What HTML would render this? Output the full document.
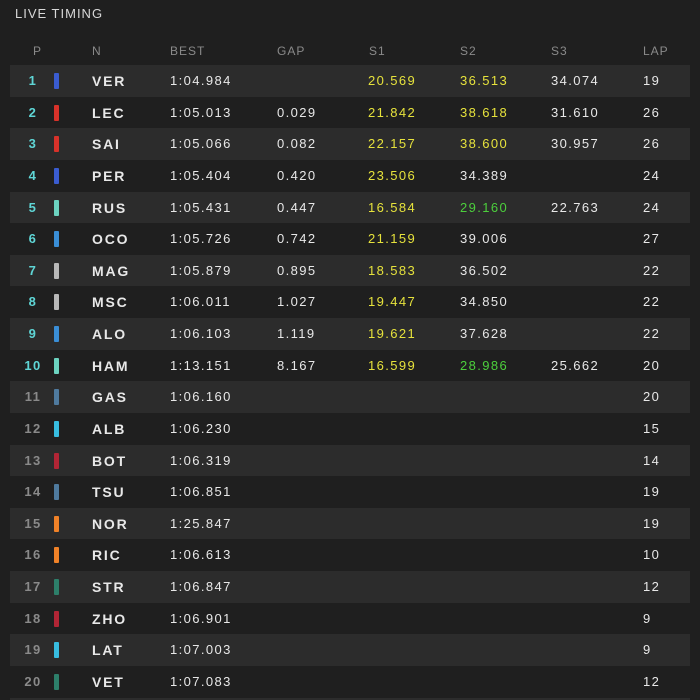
<!DOCTYPE html>
<html style="height:700px;overflow:hidden"><head><meta charset="utf-8"><style>
body{margin:0;width:700px;height:700px;background:#1f1f1f;overflow:hidden;font-family:"Liberation Sans",sans-serif;color:#e8e8e8;position:relative}
.t{position:absolute;left:15px;top:6px;font-size:13px;letter-spacing:1px;color:#d8d8d8}
.h{position:absolute;top:44px;font-size:12px;color:#8a8a8a;letter-spacing:1px}
.r{position:absolute;left:10px;width:680px;height:31.6px}
.r.s{background:#2c2c2c}
.r span{position:absolute;top:8px;font-size:13px;letter-spacing:1.4px;white-space:nowrap}
.p{font-weight:bold;width:46px;text-align:center;left:0}
.c{position:absolute;left:44px;top:8px;width:5px;height:16px;border-radius:1px}
.n{left:82px;font-weight:bold;font-size:14px!important;letter-spacing:1.8px!important}
.y{color:#e6e23c}.g{color:#4ccf3c}
</style></head><body>
<div class="t">LIVE TIMING</div>
<div class="h" style="left:33px">P</div><div class="h" style="left:92px">N</div><div class="h" style="left:170px">BEST</div><div class="h" style="left:277px">GAP</div><div class="h" style="left:369px">S1</div><div class="h" style="left:460px">S2</div><div class="h" style="left:551px">S3</div><div class="h" style="left:643px">LAP</div>
<div id="rows"></div>
<script>
var d=[
[1,'#3a5cd0','VER','1:04.984','','20.569y','36.513y','34.074','19'],
[2,'#d8322a','LEC','1:05.013','0.029','21.842y','38.618y','31.610','26'],
[3,'#d8322a','SAI','1:05.066','0.082','22.157y','38.600y','30.957','26'],
[4,'#3a5cd0','PER','1:05.404','0.420','23.506y','34.389','','24'],
[5,'#6cd3c0','RUS','1:05.431','0.447','16.584y','29.160g','22.763','24'],
[6,'#3a8ed6','OCO','1:05.726','0.742','21.159y','39.006','','27'],
[7,'#b8b8b8','MAG','1:05.879','0.895','18.583y','36.502','','22'],
[8,'#b8b8b8','MSC','1:06.011','1.027','19.447y','34.850','','22'],
[9,'#3a8ed6','ALO','1:06.103','1.119','19.621y','37.628','','22'],
[10,'#6cd3c0','HAM','1:13.151','8.167','16.599y','28.986g','25.662','20'],
[11,'#4f7a9e','GAS','1:06.160','','','','','20'],
[12,'#38bde0','ALB','1:06.230','','','','','15'],
[13,'#b12535','BOT','1:06.319','','','','','14'],
[14,'#4f7a9e','TSU','1:06.851','','','','','19'],
[15,'#f08228','NOR','1:25.847','','','','','19'],
[16,'#f08228','RIC','1:06.613','','','','','10'],
[17,'#2d7f6a','STR','1:06.847','','','','','12'],
[18,'#b12535','ZHO','1:06.901','','','','','9'],
[19,'#38bde0','LAT','1:07.003','','','','','9'],
[20,'#2d7f6a','VET','1:07.083','','','','','12'],
[21,'#4f7a9e','VET','1:07.120','','','','','5']];
var h='',xs=[160,267,358,450,541,633];
d.forEach(function(r,i){
var top=65+i*31.63;
h+='<div class="r'+(i%2==0?' s':'')+'" style="top:'+top+'px">';
h+='<span class="p" style="color:'+(r[0]<=10?'#5fd6d6':'#8a8a8a')+'">'+r[0]+'</span>';
h+='<div class="c" style="background:'+r[1]+'"></div>';
h+='<span class="n">'+r[2]+'</span>';
for(var k=0;k<6;k++){var v=r[3+k],cl='';if(v.slice(-1)=='y'){cl='y';v=v.slice(0,-1)}else if(v.slice(-1)=='g'){cl='g';v=v.slice(0,-1)}
h+='<span class="'+cl+'" style="left:'+xs[k]+'px">'+v+'</span>';}
h+='</div>';});
document.getElementById('rows').innerHTML=h;
</script>
</body></html>
